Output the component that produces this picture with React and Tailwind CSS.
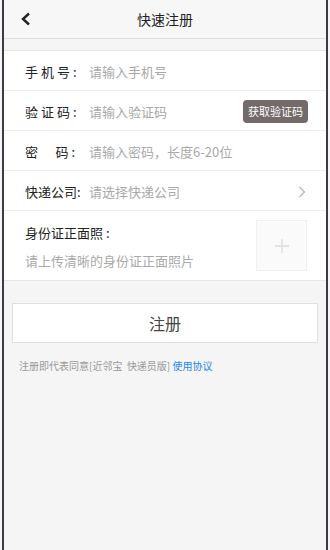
import React from "react";

const font = { fontFamily: '"Noto Sans CJK SC", "Noto Sans", sans-serif' };

function Row({ label, placeholder, right, labelClass = "" }) {
  return (
    <div className="flex h-[40px] items-center border-b border-[#eeeeee] bg-white pl-[21px] pr-[18px] pt-[2px]">
      <span className={`w-[64px] shrink-0 text-[13px] text-[#222] ${labelClass}`}>{label}</span>
      <span className="flex-1 text-[13px] text-[#a9a9a9]">{placeholder}</span>
      {right}
    </div>
  );
}

export default function App() {
  return (
    <div className="h-[550px] w-[330px] overflow-hidden bg-[#f5f5f5] px-[2px]" style={font}>
      <div className="flex h-full flex-col border-x-2 border-[#3b3b45] bg-[#f5f5f5]">
        <div className="relative flex h-[39px] items-center justify-center border-b border-[#e0e0e0] bg-[#f7f7f7]">
          <svg className="absolute left-[16px] top-[12px]" width="12" height="14" viewBox="0 0 12 14">
            <path d="M9 1.5 L3 7 L9 12.5" fill="none" stroke="#222" strokeWidth="2.4" />
          </svg>
          <span className="text-[14px] text-[#222]">快速注册</span>
        </div>
        <div className="h-[12px] border-b border-[#e6e6e6]" />
        <Row label="手机号:" placeholder="请输入手机号" labelClass="tracking-[3px]" />
        <Row
          label="验证码:"
          placeholder="请输入验证码"
          labelClass="tracking-[3px]"
          right={
            <span className="rounded-[4px] bg-[#736a6a] px-[5px] py-[3px] text-[11px] text-white">获取验证码</span>
          }
        />
        <Row label="密      码 :" placeholder="请输入密码，长度6-20位" labelClass="whitespace-pre" />
        <Row
          label="快递公司:"
          placeholder="请选择快递公司"
          right={
            <svg width="8" height="12" viewBox="0 0 8 12" className="mr-[2px]">
              <path d="M1.5 1 L6.5 6 L1.5 11" fill="none" stroke="#b5b5b5" strokeWidth="1.2" />
            </svg>
          }
        />
        <div className="flex h-[70px] items-center border-b border-[#e6e6e6] bg-white pl-[21px] pr-[19px]">
          <div className="flex flex-1 flex-col gap-[9px] pt-[2px]">
            <span className="text-[13px] text-[#222]">身份证正面照 :</span>
            <span className="text-[13px] text-[#a9a9a9]">请上传清晰的身份证正面照片</span>
          </div>
          <div className="flex h-[51px] w-[51px] items-center justify-center border border-[#f0f0f0] bg-[#fafafa]">
            <svg width="16" height="16" viewBox="0 0 16 16">
              <path d="M8 1 V15 M1 8 H15" stroke="#dcdcdc" strokeWidth="1.3" />
            </svg>
          </div>
        </div>
        <div className="mx-[8px] mt-[22px] flex h-[40px] items-center justify-center border border-[#e0e0e0] bg-white">
          <span className="text-[16px] text-[#444]">注册</span>
        </div>
        <div className="mt-[15px] pl-[15px] text-[10px] text-[#999]">
          注册即代表同意[近邻宝{"\u00a0\u00a0"}快递员版] <span className="text-[#1e88e5]">使用协议</span>
        </div>
      </div>
    </div>
  );
}
